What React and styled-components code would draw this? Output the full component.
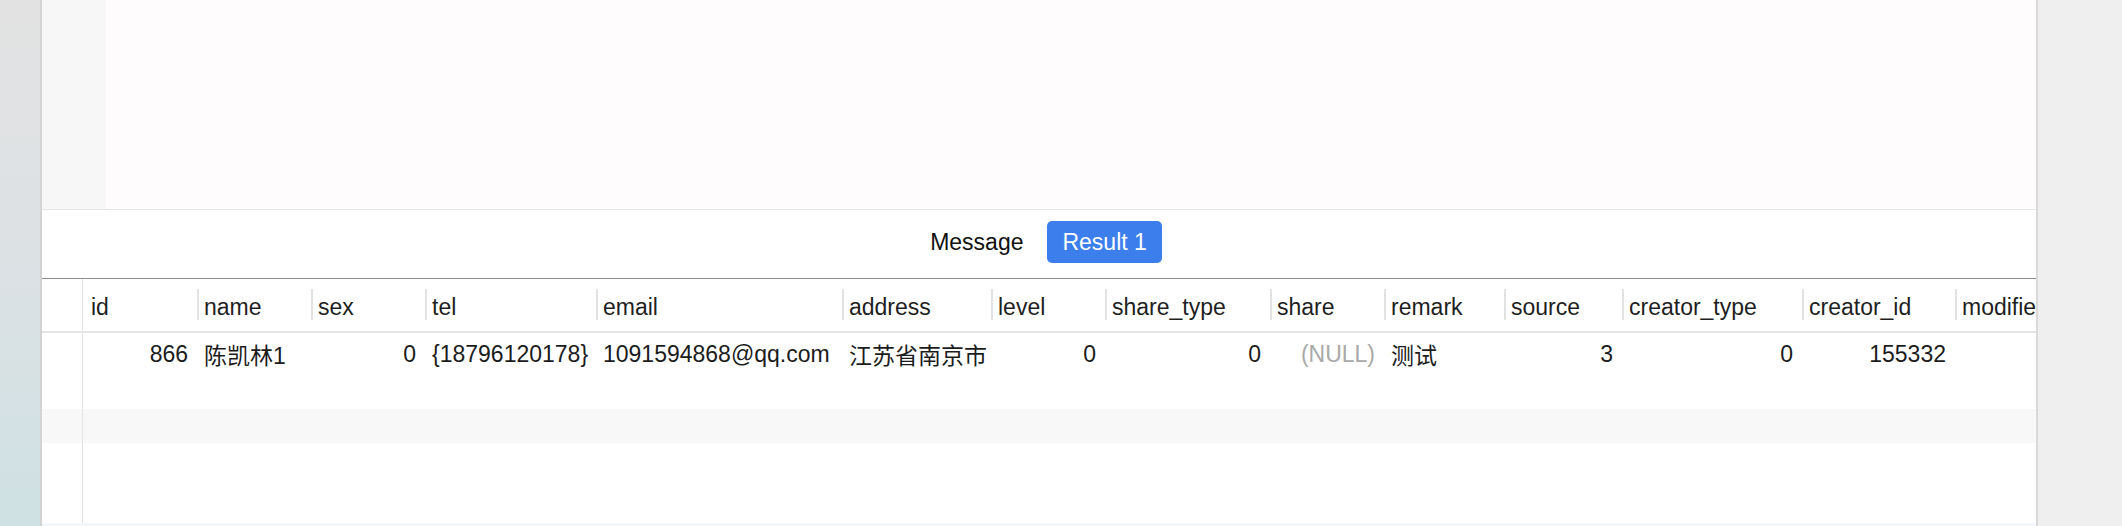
import React from "react";
import styled, { createGlobalStyle } from "styled-components";

const Global = createGlobalStyle`
  html, body { margin: 0; padding: 0; background: #efefef; }
  body { font-family: "Liberation Sans", "Noto Sans CJK SC", Arial, sans-serif; }
  #root { width: 2122px; height: 526px; overflow: hidden; }
`;

const Page = styled.div`
  display: flex;
  width: 2122px;
  height: 526px;
  overflow: hidden;
`;

const SideStrip = styled.div`
  width: 40px;
  flex: none;
  background: linear-gradient(180deg, #e2e2e2 0%, #dde1e4 45%, #cfe1e3 100%);
  border-right: 2px solid #d3d3d3;
`;

const Main = styled.div`
  width: 1994px;
  flex: none;
  display: flex;
  flex-direction: column;
  background: #ffffff;
  border-right: 2px solid #d9d9d9;
  overflow: hidden;
`;

const RightArea = styled.div`
  flex: 1;
  background: #efefef;
`;

const Editor = styled.div`
  height: 209px;
  display: flex;
  border-bottom: 1px solid #e6e6e6;
  flex: none;
`;

const LineGutter = styled.div`
  width: 64px;
  background: #f7f7f7;
`;

const CodeArea = styled.div`
  flex: 1;
  background: #fffcfd;
`;

const TabBar = styled.div`
  height: 68px;
  flex: none;
  display: flex;
  justify-content: center;
  align-items: flex-start;
  padding-top: 11px;
  box-sizing: border-box;
  gap: 10px;
  background: #ffffff;
`;

const Tab = styled.button`
  height: 42px;
  padding: 0 ${(p) => (p.$active ? 15 : 14)}px;
  border: none;
  border-radius: 5px;
  font-family: "Liberation Sans", "Noto Sans CJK SC", Arial, sans-serif;
  font-size: 23px;
  cursor: pointer;
  background: ${(p) => (p.$active ? "#3c7eec" : "transparent")};
  color: ${(p) => (p.$active ? "#ffffff" : "#111111")};
`;

const Grid = styled.div`
  flex: 1;
  display: flex;
  flex-direction: column;
  border-top: 1px solid #8c8c8c;
  overflow: hidden;
`;

const Row = styled.div`
  display: flex;
  flex: none;
  height: ${(p) => p.$h}px;
  background: ${(p) => (p.$striped ? "#f8f8f8" : "#ffffff")};
  border-bottom: ${(p) => (p.$header ? "2px solid #e5e5e5" : "none")};
`;

const FillRow = styled(Row)`
  flex: 1;
  height: auto;
`;

const RowGutter = styled.div`
  width: 40px;
  flex: none;
  border-right: 1px solid #e2e2e2;
`;

const HeaderCell = styled.div`
  width: ${(p) => p.$w}px;
  flex: none;
  box-sizing: border-box;
  display: flex;
  align-items: center;
  padding-top: 5px;
  padding-left: ${(p) => (p.$first ? 8 : 7)}px;
  font-size: 23px;
  color: #1f1f1f;
  white-space: nowrap;
  overflow: hidden;
  background: ${(p) =>
    p.$first
      ? "none"
      : "linear-gradient(#e2e2e2, #e2e2e2) 0 10px / 2px 31px no-repeat"};
`;

const Cell = styled.div`
  width: ${(p) => p.$w}px;
  flex: none;
  box-sizing: border-box;
  display: flex;
  align-items: center;
  justify-content: ${(p) => (p.$right ? "flex-end" : "flex-start")};
  padding: 0 9px 0 7px;
  font-size: 23px;
  color: ${(p) => (p.$null ? "#a9a9a9" : "#1c1c1c")};
  white-space: nowrap;
  overflow: hidden;
`;

const BottomStrip = styled.div`
  height: 3px;
  flex: none;
  background: #f3f6fa;
`;

const columns = [
  { name: "id", w: 114, right: true, value: "866" },
  { name: "name", w: 114, value: "陈凯林1" },
  { name: "sex", w: 114, right: true, value: "0" },
  { name: "tel", w: 171, value: "{18796120178}" },
  { name: "email", w: 246, value: "1091594868@qq.com" },
  { name: "address", w: 149, value: "江苏省南京市" },
  { name: "level", w: 114, right: true, value: "0" },
  { name: "share_type", w: 165, right: true, value: "0" },
  { name: "share", w: 114, right: true, value: "(NULL)", isNull: true },
  { name: "remark", w: 120, value: "测试" },
  { name: "source", w: 118, right: true, value: "3" },
  { name: "creator_type", w: 180, right: true, value: "0" },
  { name: "creator_id", w: 153, right: true, value: "155332" },
  { name: "modified_time", w: 200, value: "" },
];

export default function App() {
  return (
    <>
      <Global />
      <Page>
        <SideStrip />
        <Main>
          <Editor>
            <LineGutter />
            <CodeArea />
          </Editor>
          <TabBar>
            <Tab>Message</Tab>
            <Tab $active>Result 1</Tab>
          </TabBar>
          <Grid>
            <Row $h={52} $header>
              <RowGutter />
              {columns.map((c, i) => (
                <HeaderCell key={c.name} $w={c.w} $first={i === 0}>
                  {c.name}
                </HeaderCell>
              ))}
            </Row>
            <Row $h={42}>
              <RowGutter />
              {columns.map((c) => (
                <Cell key={c.name} $w={c.w} $right={c.right} $null={c.isNull}>
                  {c.value}
                </Cell>
              ))}
            </Row>
            <Row $h={34}>
              <RowGutter />
            </Row>
            <Row $h={34} $striped>
              <RowGutter />
            </Row>
            <FillRow>
              <RowGutter />
            </FillRow>
            <BottomStrip />
          </Grid>
        </Main>
        <RightArea />
      </Page>
    </>
  );
}
